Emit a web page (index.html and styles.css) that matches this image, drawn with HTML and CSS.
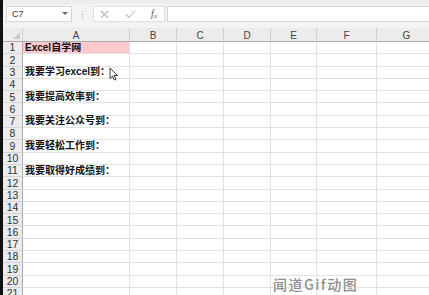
FILE: index.html
```html
<!DOCTYPE html>
<html lang="zh-CN">
<head>
<meta charset="utf-8">
<title>Excel</title>
<link rel="stylesheet" href="styles.css">
</head>
<body>
<div class="app">
  <div class="edge"></div>
  <div class="main">
    <div class="toolbar">
      <div class="namebox">
        <span class="ref">C7</span>
        <svg class="drop" width="6" height="4" viewBox="0 0 6 4"><path d="M0 0 L6 0 L3 3 Z" fill="#666"/></svg>
      </div>
      <div class="sep"><i></i><i></i><i></i></div>
      <div class="fxbtns">
        <svg width="9" height="9" viewBox="0 0 9 9"><path d="M1 1 L8 8 M8 1 L1 8" stroke="#b8b8b8" stroke-width="1.1" fill="none"/></svg>
        <svg width="11" height="9" viewBox="0 0 11 9"><path d="M1 4.5 L4 7.5 L10 1" stroke="#b8b8b8" stroke-width="1.1" fill="none"/></svg>
        <span class="fx">f<sub>x</sub></span>
      </div>
      <div class="formula"></div>
    </div>
    <div class="sheet">
      <div class="corner"><svg width="7" height="7" viewBox="0 0 7 7"><path d="M7 0 L7 7 L0 7 Z" fill="#c8c8c8"/></svg></div>
      <div class="ch">A</div><div class="ch">B</div><div class="ch">C</div><div class="ch">D</div><div class="ch">E</div><div class="ch">F</div><div class="ch">G</div>

      <div class="rh">1</div><div class="c pink bold">Excel自学网</div><div class="c"></div><div class="c"></div><div class="c"></div><div class="c"></div><div class="c"></div><div class="c"></div>
      <div class="rh">2</div><div class="c"></div><div class="c"></div><div class="c"></div><div class="c"></div><div class="c"></div><div class="c"></div><div class="c"></div>
      <div class="rh">3</div><div class="c bold">我要学习excel到：</div><div class="c"></div><div class="c"></div><div class="c"></div><div class="c"></div><div class="c"></div><div class="c"></div>
      <div class="rh">4</div><div class="c"></div><div class="c"></div><div class="c"></div><div class="c"></div><div class="c"></div><div class="c"></div><div class="c"></div>
      <div class="rh">5</div><div class="c bold">我要提高效率到：</div><div class="c"></div><div class="c"></div><div class="c"></div><div class="c"></div><div class="c"></div><div class="c"></div>
      <div class="rh">6</div><div class="c"></div><div class="c"></div><div class="c"></div><div class="c"></div><div class="c"></div><div class="c"></div><div class="c"></div>
      <div class="rh">7</div><div class="c bold">我要关注公众号到：</div><div class="c"></div><div class="c"></div><div class="c"></div><div class="c"></div><div class="c"></div><div class="c"></div>
      <div class="rh">8</div><div class="c"></div><div class="c"></div><div class="c"></div><div class="c"></div><div class="c"></div><div class="c"></div><div class="c"></div>
      <div class="rh">9</div><div class="c bold">我要轻松工作到：</div><div class="c"></div><div class="c"></div><div class="c"></div><div class="c"></div><div class="c"></div><div class="c"></div>
      <div class="rh">10</div><div class="c"></div><div class="c"></div><div class="c"></div><div class="c"></div><div class="c"></div><div class="c"></div><div class="c"></div>
      <div class="rh">11</div><div class="c bold">我要取得好成绩到：</div><div class="c"></div><div class="c"></div><div class="c"></div><div class="c"></div><div class="c"></div><div class="c"></div>
      <div class="rh">12</div><div class="c"></div><div class="c"></div><div class="c"></div><div class="c"></div><div class="c"></div><div class="c"></div><div class="c"></div>
      <div class="rh">13</div><div class="c"></div><div class="c"></div><div class="c"></div><div class="c"></div><div class="c"></div><div class="c"></div><div class="c"></div>
      <div class="rh">14</div><div class="c"></div><div class="c"></div><div class="c"></div><div class="c"></div><div class="c"></div><div class="c"></div><div class="c"></div>
      <div class="rh">15</div><div class="c"></div><div class="c"></div><div class="c"></div><div class="c"></div><div class="c"></div><div class="c"></div><div class="c"></div>
      <div class="rh">16</div><div class="c"></div><div class="c"></div><div class="c"></div><div class="c"></div><div class="c"></div><div class="c"></div><div class="c"></div>
      <div class="rh">17</div><div class="c"></div><div class="c"></div><div class="c"></div><div class="c"></div><div class="c"></div><div class="c"></div><div class="c"></div>
      <div class="rh">18</div><div class="c"></div><div class="c"></div><div class="c"></div><div class="c"></div><div class="c"></div><div class="c"></div><div class="c"></div>
      <div class="rh">19</div><div class="c"></div><div class="c"></div><div class="c"></div><div class="c"></div><div class="c"></div><div class="c"></div><div class="c"></div>
      <div class="rh">20</div><div class="c"></div><div class="c"></div><div class="c"></div><div class="c"></div><div class="c"></div><div class="c"></div><div class="c"></div>
      <div class="rh">21</div><div class="c"></div><div class="c"></div><div class="c"></div><div class="c"></div><div class="c"></div><div class="c"></div><div class="c"></div>
    </div>
  </div>
  <svg class="cursor" width="11" height="15" viewBox="0 0 11 15">
    <path d="M1.5 1.5 L1.5 12 L4 9.6 L5.8 13.5 L7.4 12.8 L5.6 9 L9 9 Z" fill="#d8d8d8" opacity="0.6" transform="translate(0.8 0.8)"/>
    <path d="M1 1 L1 11.5 L3.5 9.1 L5.3 13 L6.9 12.3 L5.1 8.5 L8.5 8.5 Z" fill="#fff" stroke="#222" stroke-width="0.9" stroke-linejoin="round"/>
  </svg>
  <div class="watermark">闻道Gif动图</div>
</div>
</body>
</html>
```
FILE: styles.css
```css
* { box-sizing: border-box; }
html, body { margin: 0; padding: 0; background: #fff; }
body { width: 429px; height: 295px; overflow: hidden; font-family: "Liberation Sans", "Noto Sans CJK SC", sans-serif; }

.app { position: relative; display: flex; width: 429px; height: 295px; overflow: hidden; }
.edge { width: 3px; flex: none; background: #111; }
.main { flex: 1; display: flex; flex-direction: column; min-width: 0; }

.toolbar {
  height: 28px; flex: none;
  background: #f3f3f3;
  border-top: 4px solid #ececec;
  display: flex; align-items: flex-start;
  padding: 2px 0 0 3px;
}
.namebox {
  width: 66px; height: 16px;
  background: #fff; border: 1px solid #d6d6d6;
  display: flex; align-items: center; justify-content: space-between;
  padding: 0 3px 0 5px;
}
.ref { font-size: 9px; color: #333; }
.drop { margin-bottom: 1px; }
.sep { width: 21px; height: 16px; display: flex; flex-direction: column; align-items: center; justify-content: center; gap: 2px; }
.sep i { display: block; width: 1px; height: 1px; background: #9a9a9a; }
.fxbtns {
  width: 72px; height: 16px;
  background: #fff; border: 1px solid #dedede;
  display: flex; align-items: center; justify-content: space-between;
  padding: 0 7px 0 6px;
}
.fx { font-family: "Liberation Serif", serif; font-style: italic; font-size: 10px; color: #555; line-height: 1; }
.fx sub { font-size: 7px; vertical-align: -1px; }
.formula { flex: 1; height: 16px; margin-left: 2px; background: #fff; border: 1px solid #d6d6d6; border-right: none; }

.sheet {
  flex: 1;
  display: grid;
  grid-template-columns: 20px 107px 47px 47px 47px 46px 60px 60px;
  grid-template-rows: 14px repeat(21, 12.3px);
  overflow: hidden;
  background: #fff;
}
.corner {
  background: #ececec;
  border-right: 1px solid #d0d0d0; border-bottom: 1px solid #ababab;
  display: flex; align-items: flex-end; justify-content: flex-end;
  padding: 0 2px 2px 0;
}
.ch {
  background: #ececec;
  border-right: 1px solid #d0d0d0; border-bottom: 1px solid #ababab;
  font-size: 10px; color: #444;
  display: flex; align-items: center; justify-content: center;
  padding-top: 2px;
}
.rh {
  background: #ececec;
  border-right: 1px solid #ababab; border-bottom: 1px solid #d4d4d4;
  font-size: 10.5px; color: #333;
  display: flex; align-items: center; justify-content: center;
  line-height: 1;
}
.c {
  border-right: 1px solid #e2e2e2; border-bottom: 1px solid #e2e2e2;
  font-size: 10px; color: #111;
  display: flex; align-items: center;
  padding-left: 2px; white-space: nowrap; line-height: 1;
}
.bold { font-weight: bold; }
.pink { background: #ffc7ce; }

.cursor { position: absolute; left: 109px; top: 67px; }
.watermark {
  position: absolute; left: 273px; top: 276px;
  font-family: "Noto Sans CJK SC", sans-serif; font-size: 14px; color: #8c8c8c;
  letter-spacing: 1.5px; font-weight: 500;
  text-shadow: 1px 0 0 #fff, -1px 0 0 #fff, 0 1px 0 #fff, 0 -1px 0 #fff;
  line-height: 16px;
}
```
